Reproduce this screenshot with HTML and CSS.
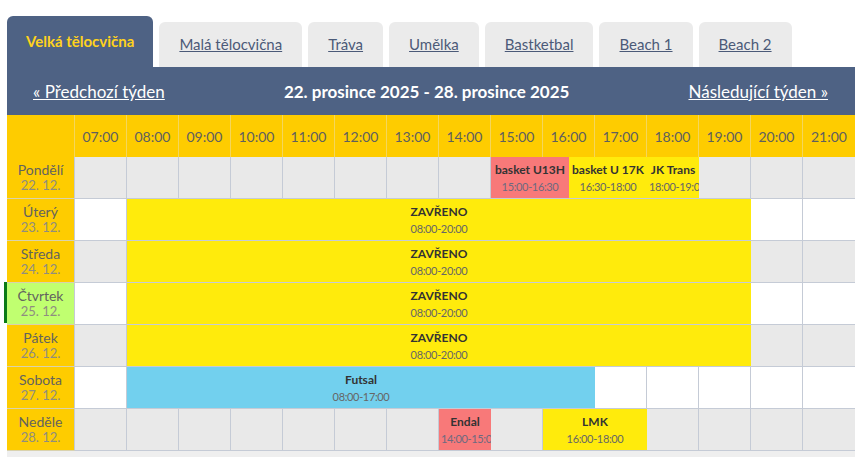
FILE: index.html
```html
<!DOCTYPE html>
<html lang="cs">
<head>
<meta charset="utf-8">
<title>Rozvrh – Velká tělocvična</title>
<link rel="stylesheet" href="styles.css">
</head>
<body>
<div class="page">
  <nav class="tabs">
    <a class="tab active">Velká tělocvična</a>
    <a class="tab" href="#">Malá tělocvična</a>
    <a class="tab" href="#">Tráva</a>
    <a class="tab" href="#">Umělka</a>
    <a class="tab" href="#">Bastketbal</a>
    <a class="tab" href="#">Beach 1</a>
    <a class="tab" href="#">Beach 2</a>
  </nav>
  <div class="weekbar">
    <a href="#">« Předchozí týden</a>
    <strong>22. prosince 2025 - 28. prosince 2025</strong>
    <a href="#">Následující týden »</a>
  </div>
  <div class="grid">
    <div class="row head">
      <div class="corner"></div>
      <div class="hour">07:00</div><div class="hour">08:00</div><div class="hour">09:00</div><div class="hour">10:00</div><div class="hour">11:00</div><div class="hour">12:00</div><div class="hour">13:00</div><div class="hour">14:00</div><div class="hour">15:00</div><div class="hour">16:00</div><div class="hour">17:00</div><div class="hour">18:00</div><div class="hour">19:00</div><div class="hour">20:00</div><div class="hour">21:00</div>
    </div>
    <div class="row odd">
      <div class="day"><span class="name">Pondělí</span><span class="date">22. 12.</span></div>
      <div class="slot"></div><div class="slot"></div><div class="slot"></div><div class="slot"></div><div class="slot"></div><div class="slot"></div><div class="slot"></div><div class="slot"></div>
      <div class="ev red" style="grid-column: span 3"><span class="title">basket U13H</span><span class="time">15:00-16:30</span></div>
      <div class="ev yellow" style="grid-column: span 3"><span class="title">basket U 17K</span><span class="time">16:30-18:00</span></div>
      <div class="ev yellow" style="grid-column: span 2"><span class="title">JK Trans</span><span class="time">18:00-19:00</span></div>
      <div class="slot"></div><div class="slot"></div><div class="slot"></div>
    </div>
    <div class="row even">
      <div class="day"><span class="name">Úterý</span><span class="date">23. 12.</span></div>
      <div class="slot"></div>
      <div class="ev yellow" style="grid-column: span 24"><span class="title">ZAVŘENO</span><span class="time">08:00-20:00</span></div>
      <div class="slot"></div><div class="slot"></div>
    </div>
    <div class="row odd">
      <div class="day"><span class="name">Středa</span><span class="date">24. 12.</span></div>
      <div class="slot"></div>
      <div class="ev yellow" style="grid-column: span 24"><span class="title">ZAVŘENO</span><span class="time">08:00-20:00</span></div>
      <div class="slot"></div><div class="slot"></div>
    </div>
    <div class="row even">
      <div class="day today"><span class="name">Čtvrtek</span><span class="date">25. 12.</span></div>
      <div class="slot"></div>
      <div class="ev yellow" style="grid-column: span 24"><span class="title">ZAVŘENO</span><span class="time">08:00-20:00</span></div>
      <div class="slot"></div><div class="slot"></div>
    </div>
    <div class="row odd">
      <div class="day"><span class="name">Pátek</span><span class="date">26. 12.</span></div>
      <div class="slot"></div>
      <div class="ev yellow" style="grid-column: span 24"><span class="title">ZAVŘENO</span><span class="time">08:00-20:00</span></div>
      <div class="slot"></div><div class="slot"></div>
    </div>
    <div class="row even">
      <div class="day"><span class="name">Sobota</span><span class="date">27. 12.</span></div>
      <div class="slot"></div>
      <div class="ev blue" style="grid-column: span 18"><span class="title">Futsal</span><span class="time">08:00-17:00</span></div>
      <div class="slot"></div><div class="slot"></div><div class="slot"></div><div class="slot"></div><div class="slot"></div>
    </div>
    <div class="row odd">
      <div class="day"><span class="name">Neděle</span><span class="date">28. 12.</span></div>
      <div class="slot"></div><div class="slot"></div><div class="slot"></div><div class="slot"></div><div class="slot"></div><div class="slot"></div><div class="slot"></div>
      <div class="ev red" style="grid-column: span 2"><span class="title">Endal</span><span class="time">14:00-15:00</span></div>
      <div class="slot"></div>
      <div class="ev yellow" style="grid-column: span 4"><span class="title">LMK</span><span class="time">16:00-18:00</span></div>
      <div class="slot"></div><div class="slot"></div><div class="slot"></div><div class="slot"></div>
    </div>
  </div>
  <div class="track"></div>
</div>
</body>
</html>
```
FILE: styles.css
```css
* { box-sizing: border-box; }
html, body { margin: 0; background: #fff; }
body { font-family: Lato, "Open Sans", sans-serif; color: #333; }

.page { width: 848px; margin: 16px 0 0 7px; }

/* Tabs */
.tabs { display: flex; align-items: flex-end; gap: 6px; }
.tab {
  display: block;
  height: 45px;
  padding: 12px 20px 0;
  background: #ebebeb;
  border-radius: 6px 6px 0 0;
  font-size: 15px;
  line-height: 20px;
  color: #4b5a78;
  text-decoration: underline;
  white-space: nowrap;
}
.tab.active {
  height: 51px;
  padding: 15px 19px 0;
  background: #4e6284;
  color: #ffd21c;
  font-weight: 700;
  text-decoration: none;
}

/* Week bar */
.weekbar {
  height: 48px;
  background: #4e6284;
  display: flex;
  align-items: center;
  justify-content: space-between;
  padding: 0 27px 0 26px;
  color: #fff;
  font-size: 17px;
}
.weekbar a { color: #fff; text-decoration: underline; }
.weekbar strong { font-size: 17px; font-weight: 700; }

/* Grid */
.grid {
  display: grid;
  grid-template-columns: 68px repeat(30, 26px);
  grid-auto-rows: 42px;
}
.row { display: contents; }

.corner, .hour {
  background: #fecc00;
  border-right: 1px solid #f4d65c;
}
.hour {
  grid-column: span 2;
  display: flex;
  align-items: center;
  justify-content: center;
  font-size: 14px;
  color: #5f5f5f;
}
.row.head > :last-child { border-right: 0; }

.day {
  position: relative;
  background: #fecc00;
  border-right: 1px solid #c5cbd6;
  border-bottom: 1px solid #d9d2ae;
  display: flex;
  flex-direction: column;
  align-items: center;
  padding-top: 5px;
}
.day .name { font-size: 14px; line-height: 16px; color: #63635f; }
.day .date { font-size: 13px; line-height: 14px; color: #8f8d80; }
.day.today { background: #c0ff70; }
.day.today::before {
  content: "";
  position: absolute;
  left: -3px;
  top: -1px;
  width: 3px;
  height: 41px;
  background: #0b7a16;
}

.slot {
  grid-column: span 2;
  border-right: 1px solid #c5cbd6;
  border-bottom: 1px solid #c5cbd6;
  background: #fff;
}
.row.odd .slot { background: #e9e9e9; }
.row > .slot:last-child { border-right: 0; }

.ev {
  border-bottom: 1px solid #c5cbd6;
  overflow: hidden;
  display: flex;
  flex-direction: column;
  padding: 5px 2px 0;
  text-align: center;
  white-space: nowrap;
}
.ev .title { font-size: 12px; line-height: 16px; font-weight: 700; color: #333; }
.ev .time { font-size: 11px; line-height: 17px; color: #666; letter-spacing: -0.35px; }
.ev.red { background: #f87979; }
.ev.red .time { color: #6c6a80; }
.ev.yellow { background: #ffeb0c; }
.ev.blue { background: #72d0ee; }

.track { height: 6px; background: #efefef; }
```
